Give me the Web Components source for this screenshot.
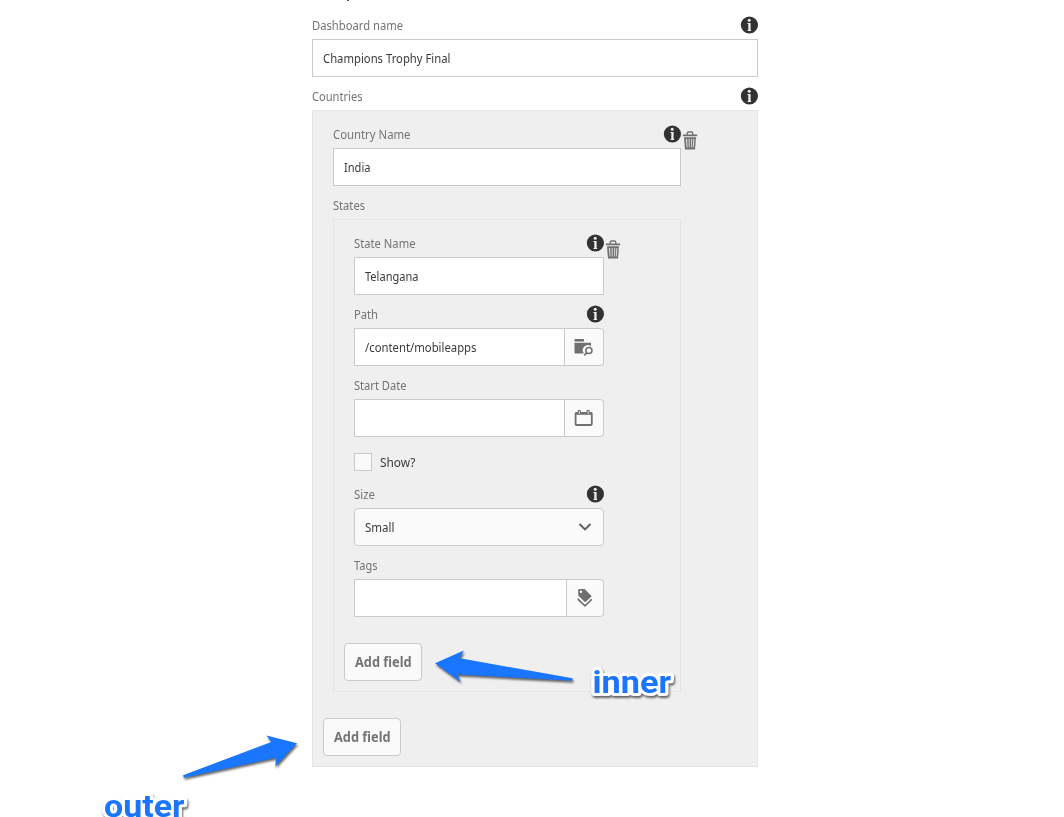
<!DOCTYPE html>
<html lang="en">
<head>
<meta charset="utf-8">
<title>Dashboard dialog</title>
<style>
html,body{margin:0;height:817px;overflow:hidden;background:#fff}
body{font-family:"Noto Sans","Open Sans",sans-serif;font-size:12.5px;color:#3a3a3a}
</style>
</head>
<body>
<app-dialog></app-dialog>
<script>
const define = (name, html, init) => {
  const t = document.createElement('template');
  t.innerHTML = html;
  customElements.define(name, class extends HTMLElement {
    constructor() {
      super();
      this.attachShadow({mode: 'open'}).append(t.content.cloneNode(true));
    }
    connectedCallback() { if (init) init.call(this, this.shadowRoot); }
  });
};

// One line of text, condensed horizontally to the width given in "w".
define('fit-text', `<style>
:host{display:inline-block;white-space:nowrap;line-height:18px}
span{display:inline-block;transform-origin:0 50%}
</style><span><slot></slot></span>`, function (r) {
  const s = r.querySelector('span'), w = +this.getAttribute('w');
  this.style.width = w + 'px';
  const n = s.getBoundingClientRect().width;
  if (n && w) s.style.transform = `scaleX(${w / n})`;
});

const icons = {
  info: [18, 18, '<circle cx="9.4" cy="9" r="8.6" fill="#323232"/><circle cx="9.2" cy="4.3" r="1.5" fill="#efefef"/><path d="M7.4 7h3.2v6.9h.5v1H7.6v-1h.7V8h-.9z" fill="#efefef"/>'],
  trash: [16, 20, '<path d="M5.2 4V2.4Q5.2 1 6.6 1h2.8q1.4 0 1.4 1.4V4" fill="none" stroke="#707070" stroke-width="1.3"/><rect x=".6" y="3.6" width="14.8" height="1.7" rx=".8" fill="#707070"/><path d="M2 6.3h12l-1 12.3H3z" fill="#707070"/><path d="M3.9 8h1.2l.5 8.6H4.7zM6.6 8h1v8.6h-.8zM9.2 8h1l-.2 8.6h-.8zM11.4 8h1l-.7 8.6h-.9z" fill="#e4e4e4"/>'],
  folder: [20, 18, '<path d="M1.2 1H9.3q.7 0 .7.7V3.4H.5V1.7q0-.7.7-.7zM.5 4.7H17v3.6a5 5 0 0 0-7.3 6.7l-.4.5H1.2q-.7 0-.7-.7z" fill="#707070"/><circle cx="14.9" cy="12.5" r="3.1" fill="none" stroke="#707070" stroke-width="1.5"/><path d="M12.7 14.9 10.2 17.4" stroke="#707070" stroke-width="1.7"/>'],
  calendar: [20, 18, '<path d="M2.3 4h14.8q.7 0 .7.7v10.4q0 .9-.9.9H2.5q-.9 0-.9-.9V4.7q0-.7.7-.7z" fill="none" stroke="#707070" stroke-width="1.8"/><path d="M1.6 3.2h16.2v2.6H1.6z" fill="#707070"/><path d="M3.6 5V2.4a1.7 1.7 0 0 1 3.4 0V5zM12.4 5V2.4a1.7 1.7 0 0 1 3.4 0V5z" fill="#707070"/><path d="M4.8 4.5V2.5a.6.6 0 0 1 1.1 0v2zM13.6 4.5V2.5a.6.6 0 0 1 1.1 0v2z" fill="#fafafa"/>'],
  tags: [16, 20, '<path d="M1.2 1.9q0-.8.8-.8h5.7L14.5 8v.4L8.6 14h-.8L1.2 7.4z" fill="#707070"/><circle cx="3.9" cy="3.8" r="1.2" fill="#fafafa"/><path d="M1.4 10.5v1.2L8 17.8l6.2-5.8v-1" fill="none" stroke="#707070" stroke-width="1.7"/>'],
  chevron: [14, 10, '<path d="M1.5 2 7 7.4 12.5 2" fill="none" stroke="#606060" stroke-width="2.1"/>']
};
define('ui-icon', '<style>:host{display:block;flex:none}svg{display:block}</style><div></div>', function (r) {
  const [w, h, p] = icons[this.getAttribute('name')];
  r.querySelector('div').innerHTML = `<svg width="${w}" height="${h}" viewBox="0 0 ${w} ${h}">${p}</svg>`;
});

define('form-label', `<style>
:host{display:flex;height:33px;box-sizing:border-box;padding-top:10px;justify-content:space-between;align-items:flex-start;color:#747474}
.t{padding-top:1px}
::slotted([slot=end]){flex:none}
</style><div class="t"><slot></slot></div><slot name="end"></slot>`);

define('text-box', `<style>
:host{display:flex;height:38px;box-sizing:border-box}
.v{flex:1;box-sizing:border-box;border:1px solid #cacaca;background:#fff;padding:10px 10px 0}
.b{display:none;box-sizing:border-box;width:var(--button-width,40px);border:1px solid #cacaca;border-left:0;border-radius:0 4px 4px 0;background:#fafafa;align-items:center;justify-content:center}
:host([button]) .b{display:flex}
:host([select]) .v{background:#fafafa;border-radius:4px;display:flex;justify-content:space-between}
::slotted(ui-icon[name=chevron]){margin:3px 1px 0 0}
</style><div class="v"><slot></slot></div><div class="b"><slot name="button"></slot></div>`);

define('check-row', `<style>
:host{display:flex;height:38px;box-sizing:border-box;padding-top:16px;align-items:flex-start;gap:8px}
i{display:block;width:18px;height:18px;box-sizing:border-box;border:1px solid #cacaca;background:#fafafa}
span{padding-top:1px}
</style><i></i><span><slot></slot></span>`);

define('add-button', `<style>
:host{display:flex;width:78px;height:38px;box-sizing:border-box;border:1px solid #cacaca;border-radius:4px;background:#fafafa;align-items:center;justify-content:center;margin-top:26px;font-weight:700;font-size:14px;color:#747474}
</style><fit-text w="56.5"><slot></slot></fit-text>`);

// A repeating group: one entry with its delete control, then the add button.
define('multi-field', `<style>
:host{display:block;box-sizing:border-box;background:#efefef;border:1px solid #e4e4e4;padding:4px 10px 10px}
.item{display:grid;grid-template-columns:1fr 66px;padding-left:10px}
.del{padding:16px 0 0 1px}
</style><div class="item"><div><slot></slot></div><div class="del"><ui-icon name="trash"></ui-icon></div></div>
<add-button>Add field</add-button>`);

// Callout arrows and captions that lie over the form.
define('callout-layer', `<style>
:host{position:absolute;inset:0;pointer-events:none}
svg{display:block}
text{font-family:Roboto,"Liberation Sans",sans-serif;font-weight:700;font-size:31px;fill:#1a75ff;stroke:#fff;stroke-width:6px;stroke-linejoin:round;paint-order:stroke}
path{fill:#1a75ff}
g{filter:drop-shadow(1px 2px 1.2px rgba(0,0,0,.6))}
</style><svg width="1064" height="817" viewBox="0 0 1064 817">
<g><path d="M435 663.2 463.8 650.5 459.8 658.3 572.5 678.3V680.8L457.5 674.5 460.5 682z"/></g>
<g><path d="M297 743.3 266.5 735.5 271.3 742 183 775.2 183.8 777.8 276 757.8 275.3 766.5z"/></g>
<g><text x="592.5" y="693" textLength="78.5" lengthAdjust="spacingAndGlyphs">inner</text></g>
<g><text x="104" y="816.5" textLength="80.5" lengthAdjust="spacingAndGlyphs">outer</text></g>
</svg>`);

define('app-dialog', `<style>
:host{display:block;position:relative;height:817px;overflow:hidden}
main{width:446px;margin-left:312px;padding-top:6px}
.sliver{position:absolute;left:347px;top:0;width:2px;height:1px;background:#555}
</style>
<div class="sliver"></div>
<main>
<form-label><fit-text w="91">Dashboard name</fit-text><ui-icon slot="end" name="info"></ui-icon></form-label>
<text-box><fit-text w="127.5">Champions Trophy Final</fit-text></text-box>
<form-label><fit-text w="50.5">Countries</fit-text><ui-icon slot="end" name="info"></ui-icon></form-label>
<multi-field>
  <form-label><fit-text w="77.5">Country Name</fit-text><ui-icon slot="end" name="info"></ui-icon></form-label>
  <text-box><fit-text w="26.5">India</fit-text></text-box>
  <form-label><fit-text w="32">States</fit-text></form-label>
  <multi-field>
    <form-label><fit-text w="61.5">State Name</fit-text><ui-icon slot="end" name="info"></ui-icon></form-label>
    <text-box><fit-text w="53.5">Telangana</fit-text></text-box>
    <form-label><fit-text w="24">Path</fit-text><ui-icon slot="end" name="info"></ui-icon></form-label>
    <text-box button style="--button-width:39px"><fit-text w="111.5">/content/mobileapps</fit-text><ui-icon slot="button" name="folder"></ui-icon></text-box>
    <form-label><fit-text w="52.5">Start Date</fit-text></form-label>
    <text-box button style="--button-width:39px"><ui-icon slot="button" name="calendar"></ui-icon></text-box>
    <check-row><fit-text w="35.5">Show?</fit-text></check-row>
    <form-label><fit-text w="21">Size</fit-text><ui-icon slot="end" name="info"></ui-icon></form-label>
    <text-box select><fit-text w="29.5">Small</fit-text><ui-icon name="chevron"></ui-icon></text-box>
    <form-label><fit-text w="23.5">Tags</fit-text></form-label>
    <text-box button style="--button-width:37px"><ui-icon slot="button" name="tags"></ui-icon></text-box>
  </multi-field>
</multi-field>
</main>
<callout-layer></callout-layer>`);
</script>
</body>
</html>
